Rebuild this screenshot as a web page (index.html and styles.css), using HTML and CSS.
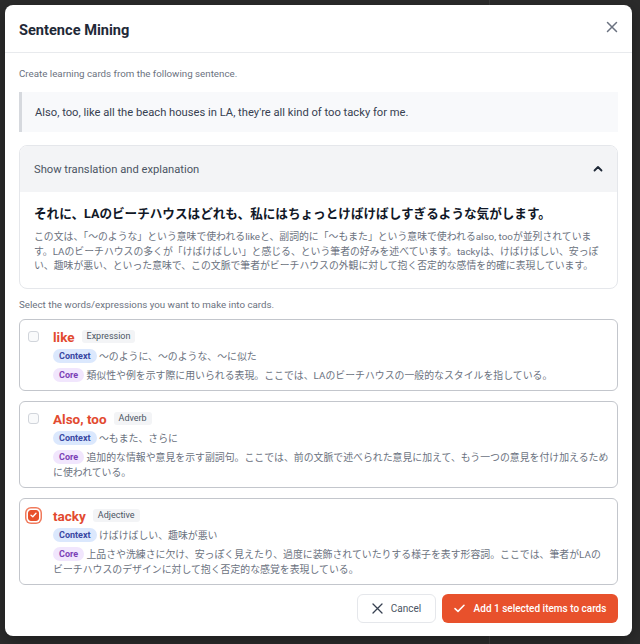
FILE: index.html
```html
<!DOCTYPE html>
<html lang="ja">
<head>
<meta charset="utf-8">
<title>Sentence Mining</title>
<link rel="stylesheet" href="styles.css">
</head>
<body>
<div class="modal">
  <header class="modal-header">
    <h1 class="modal-title">Sentence Mining</h1>
    <button class="close-btn" aria-label="Close">
      <svg width="12" height="12" viewBox="0 0 12 12"><path d="M1.5 1.5L10.5 10.5M10.5 1.5L1.5 10.5" stroke="#6b7280" stroke-width="1.5" stroke-linecap="round"/></svg>
    </button>
  </header>
  <div class="modal-body">
    <p class="intro">Create learning cards from the following sentence.</p>
    <blockquote class="quote">Also, too, like all the beach houses in LA, they're all kind of too tacky for me.</blockquote>
    <section class="accordion">
      <div class="acc-head">
        <span>Show translation and explanation</span>
        <svg width="10" height="8" viewBox="0 0 10 8"><path d="M1.5 5.5L5 2L8.5 5.5" fill="none" stroke="#1f2937" stroke-width="1.8" stroke-linecap="round" stroke-linejoin="round"/></svg>
      </div>
      <div class="acc-body">
        <p class="jp-title">それに、LAのビーチハウスはどれも、私にはちょっとけばけばしすぎるような気がします。</p>
        <p class="jp-desc">この文は、「〜のような」という意味で使われるlikeと、副詞的に「〜もまた」という意味で使われるalso, tooが並列されています。LAのビーチハウスの多くが「けばけばしい」と感じる、という筆者の好みを述べています。tackyは、けばけばしい、安っぽい、趣味が悪い、といった意味で、この文脈で筆者がビーチハウスの外観に対して抱く否定的な感情を的確に表現しています。</p>
      </div>
    </section>
    <p class="select-label">Select the words/expressions you want to make into cards.</p>
    <div class="cards">
      <div class="card">
        <span class="checkbox"></span>
        <div class="card-content">
          <div class="word-row"><span class="word">like</span><span class="tag">Expression</span></div>
          <div class="mean"><span class="pill pill-context">Context</span> 〜のように、〜のような、〜に似た</div>
          <div class="mean mean-core"><span class="pill pill-core">Core</span> 類似性や例を示す際に用いられる表現。ここでは、LAのビーチハウスの一般的なスタイルを指している。</div>
        </div>
      </div>
      <div class="card">
        <span class="checkbox"></span>
        <div class="card-content">
          <div class="word-row"><span class="word">Also, too</span><span class="tag">Adverb</span></div>
          <div class="mean"><span class="pill pill-context">Context</span> 〜もまた、さらに</div>
          <div class="mean mean-core"><span class="pill pill-core">Core</span> 追加的な情報や意見を示す副詞句。ここでは、前の文脈で述べられた意見に加えて、もう一つの意見を付け加えるために使われている。</div>
        </div>
      </div>
      <div class="card">
        <span class="checkbox checked">
          <svg width="7" height="6" viewBox="0 0 7 6"><path d="M1 3.2L2.8 4.8L6 1.2" fill="none" stroke="#fff" stroke-width="1.3" stroke-linecap="round" stroke-linejoin="round"/></svg>
        </span>
        <div class="card-content">
          <div class="word-row"><span class="word">tacky</span><span class="tag">Adjective</span></div>
          <div class="mean"><span class="pill pill-context">Context</span> けばけばしい、趣味が悪い</div>
          <div class="mean mean-core"><span class="pill pill-core">Core</span> 上品さや洗練さに欠け、安っぽく見えたり、過度に装飾されていたりする様子を表す形容詞。ここでは、筆者がLAのビーチハウスのデザインに対して抱く否定的な感覚を表現している。</div>
        </div>
      </div>
    </div>
  </div>
  <footer class="modal-footer">
    <button class="btn btn-cancel">
      <svg width="11" height="11" viewBox="0 0 11 11"><path d="M1 1L10 10M10 1L1 10" stroke="#374151" stroke-width="1.3" stroke-linecap="round"/></svg>
      Cancel
    </button>
    <button class="btn btn-add">
      <svg width="11" height="9" viewBox="0 0 11 9"><path d="M1 4.6L4 7.4L10 1.3" fill="none" stroke="#fff" stroke-width="1.5" stroke-linecap="round" stroke-linejoin="round"/></svg>
      Add 1 selected items to cards
    </button>
  </footer>
</div>
</body>
</html>
```
FILE: styles.css
```css
* { box-sizing: border-box; }

html, body {
  margin: 0;
  padding: 0;
}

body {
  width: 640px;
  height: 644px;
  overflow: hidden;
  background: linear-gradient(to right, #2c2c2c 489px, #3b3b3b 489px, #3b3b3b 490px, #2c2c2c 490px);
  font-family: "Roboto", "Noto Sans CJK JP", sans-serif;
  color: #1f2937;
  padding: 5px 0 0 5px;
}

.modal {
  width: 627px;
  height: 631px;
  background: #fff;
  border-radius: 8px;
  box-shadow: 0 4px 18px rgba(0,0,0,0.35);
  display: flex;
  flex-direction: column;
  overflow: hidden;
}

.modal-header {
  height: 48px;
  flex: none;
  display: flex;
  align-items: center;
  justify-content: space-between;
  padding: 0 14px;
  border-bottom: 1px solid #e8eaed;
}

.modal-title {
  margin: 0;
  font-size: 14.6px;
  font-weight: 700;
  color: #1f2937;
  position: relative;
  top: 1px;
}

.close-btn {
  border: 0;
  background: none;
  padding: 0;
  width: 12px;
  height: 12px;
  display: flex;
  cursor: pointer;
  position: relative;
  top: -2px;
}

.modal-body {
  flex: 1;
  padding: 14px 14px 0 14px;
}

.intro {
  margin: 0;
  font-size: 9.75px;
  line-height: 14px;
  color: #6b7280;
}

.quote {
  margin: 11px 0 0 0;
  height: 40px;
  display: flex;
  align-items: center;
  padding: 0 13px;
  background: #f8f9fb;
  border-left: 3px solid #d6d9de;
  font-size: 11.2px;
  color: #374151;
}

.accordion {
  margin-top: 13px;
  border: 1px solid #e5e7eb;
  border-radius: 8px;
  overflow: hidden;
}

.acc-head {
  height: 46px;
  background: #f3f4f6;
  display: flex;
  align-items: center;
  justify-content: space-between;
  padding: 0 14px;
  font-size: 11.2px;
  color: #4b5563;
}

.acc-body {
  padding: 13px 14px 14px 14px;
}

.jp-title {
  margin: 0;
  font-size: 12.6px;
  line-height: 18px;
  font-weight: 700;
  color: #111827;
}

.jp-desc {
  margin: 7px 0 0 0;
  font-size: 9.85px;
  line-height: 14.5px;
  color: #6b7280;
}

.select-label {
  margin: 9px 0 0 0;
  font-size: 9.75px;
  line-height: 14px;
  color: #6b7280;
}

.cards {
  margin-top: 7px;
  display: flex;
  flex-direction: column;
  gap: 10px;
}

.card {
  border: 1px solid #c3c6cc;
  border-radius: 6px;
  padding: 8px 8px 7px 8px;
  display: flex;
  gap: 14px;
}

.checkbox {
  flex: none;
  width: 11px;
  height: 11px;
  margin-top: 3px;
  border: 1px solid #d1d5db;
  border-radius: 3px;
  background: #f9fafb;
  display: flex;
  align-items: center;
  justify-content: center;
}

.checkbox.checked {
  background: #e8512c;
  border-color: #e8512c;
  box-shadow: 0 0 0 1.5px #fff, 0 0 0 3px #f07a5c;
}

.card-content {
  flex: 1;
  min-width: 0;
}

.word-row {
  height: 18px;
  display: flex;
  align-items: center;
  gap: 7px;
}

.word {
  font-size: 13.5px;
  font-weight: 700;
  color: #e24a30;
}

.tag {
  font-size: 9px;
  line-height: 13px;
  padding: 0 5px;
  background: #f3f4f6;
  color: #4b5563;
  border-radius: 3px;
}

.mean {
  margin-top: 3px;
  font-size: 9.9px;
  line-height: 15px;
  color: #6b7280;
}

.mean-core {
  margin-top: 4px;
}

.pill {
  display: inline-block;
  height: 14px;
  line-height: 14px;
  padding: 0 6px;
  border-radius: 7px;
  font-size: 9px;
  font-weight: 700;
  vertical-align: top;
  margin-top: 0.5px;
}

.pill-context {
  background: #dbe8fd;
  color: #3949a3;
}

.pill-core {
  background: #f1e6fd;
  color: #7b3fb6;
}

.modal-footer {
  flex: none;
  display: flex;
  justify-content: flex-end;
  gap: 6px;
  padding: 0 14px 13px 14px;
}

.btn {
  height: 29px;
  border-radius: 6px;
  font-family: "Roboto", sans-serif;
  font-size: 10px;
  display: flex;
  align-items: center;
  justify-content: center;
  gap: 8px;
  white-space: nowrap;
  cursor: pointer;
}

.btn-cancel {
  width: 79px;
  background: #fff;
  border: 1px solid #e5e7eb;
  color: #4b5563;
}

.btn-add {
  width: 176px;
  background: #e8512c;
  border: 0;
  color: #fff;
  font-weight: 500;
  gap: 9px;
}
```
